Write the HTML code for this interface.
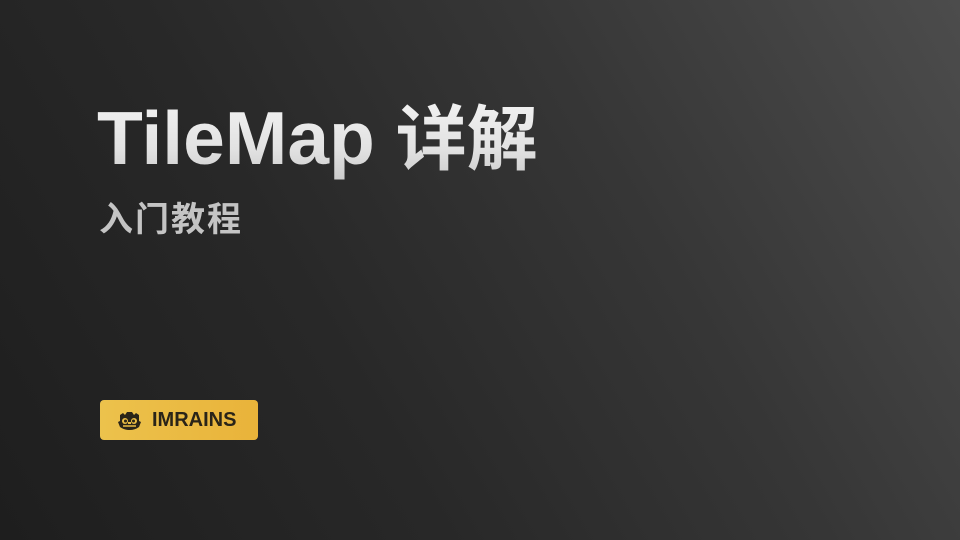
<!DOCTYPE html>
<html><head><meta charset="utf-8"><style>
html,body{margin:0;padding:0}
body{width:960px;height:540px;overflow:hidden;position:relative;
background:linear-gradient(60deg,#1e1e1e 0%,#282828 35%,#363636 65%,#4c4c4c 100%);
font-family:"Liberation Sans","Noto Sans CJK SC",sans-serif}
.t{position:absolute;left:97px;top:93px;font-size:75px;font-weight:bold;line-height:90px;white-space:nowrap;
background:linear-gradient(180deg,#f4f4f4 0%,#e2e2e2 60%,#c8c8c8 100%);-webkit-background-clip:text;background-clip:text;color:transparent}
.t .c{font-size:71px}
.s{position:absolute;left:99px;top:196px;font-size:34px;font-weight:bold;letter-spacing:2px;color:#c4c4c4;line-height:42px;font-family:"Noto Sans CJK SC",sans-serif}
.b{position:absolute;left:100px;top:400px;width:158px;height:40px;border-radius:4px;
background:linear-gradient(90deg,#ecc24c,#e9b33a);color:#2a2418;font-weight:bold;font-size:20px}
.b span{position:absolute;left:52px;top:9px;line-height:22px}
.b svg{position:absolute;left:17px;top:9px}
</style></head><body>
<div class="t">TileMap <span class="c">详解</span></div>
<div class="s">入门教程</div>
<div class="b">
<svg width="25" height="22" viewBox="0 0 25 22">
<path d="M3 6 L6 4 L8 6 L10 3 L15 3 L17 6 L19 4 L22 6 L22 12 L24 13 L22 18 Q18 21 12.5 21 Q7 21 3 18 L1 13 L3 12 Z" fill="#2a2418"/>
<circle cx="8" cy="12" r="3" fill="#ebbd45"/><circle cx="17" cy="12" r="3" fill="#ebbd45"/>
<circle cx="8.5" cy="12" r="1.5" fill="#2a2418"/><circle cx="16.5" cy="12" r="1.5" fill="#2a2418"/>
<rect x="11" y="13" width="3" height="2" fill="#ebbd45"/>
<path d="M6 17 H19" stroke="#ebbd45" stroke-width="1.5"/>
</svg>
<span>IMRAINS</span></div>
</body></html>
